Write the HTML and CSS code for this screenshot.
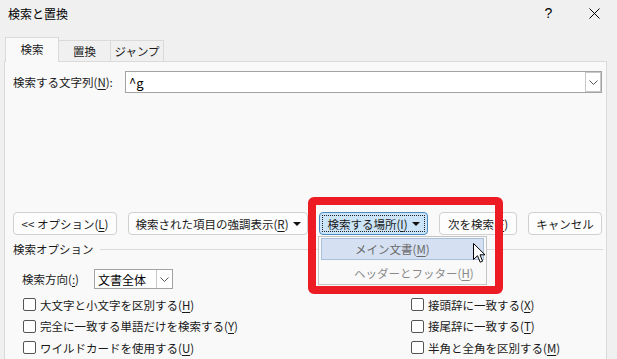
FILE: index.html
```html
<!DOCTYPE html>
<html>
	<head>
		<meta charset="UTF-8">
		<title>検索と置換</title>
		<link rel="stylesheet" href="styles.css">
	</head>
	<body>
		<div class="dialog">
			<div class="titlebar">
				<span class="title">検索と置換</span>
				<span class="help">?</span>
				<span class="close">
					<svg width="11" height="11" viewBox="0 0 11 11"><path d="M0.5 0.5 L10.5 10.5 M10.5 0.5 L0.5 10.5" stroke="#000" stroke-width="1"/></svg>
				</span>
			</div>
			<div class="tabs">
				<div class="tab active">検索</div>
				<div class="tab">置換</div>
				<div class="tab">ジャンプ</div>
			</div>
			<div class="panel">
				<div class="find-row">
					<span class="find-label">検索する文字列(<u>N</u>):</span>
					<div class="combo">
						<span class="combo-text">^g</span>
						<span class="combo-btn">
							<svg width="9" height="5" viewBox="0 0 9 5"><path d="M0.5 0.5 L4.5 4.5 L8.5 0.5" fill="none" stroke="#555" stroke-width="1"/></svg>
						</span>
					</div>
				</div>

				<div class="buttons">
					<div class="btn w-opt">&lt;&lt; オプション(<u>L</u>)</div>
					<div class="btn w-hl">検索された項目の強調表示(<u>R</u>) <span class="caret"></span></div>
					<div class="btn w-where focused"><span class="focus-ring">検索する場所(<u>I</u>) <span class="caret"></span></span></div>
					<div class="btn w-next">次を検索(<u>F</u>)</div>
					<div class="btn w-cancel">キャンセル</div>
				</div>

				<div class="group-head">
					<span>検索オプション</span>
					<span class="rule"></span>
				</div>

				<div class="direction">
					<span class="dir-label">検索方向(<u>:</u>)</span>
					<div class="select">
						<span class="select-text">文書全体</span>
						<span class="select-btn">
							<svg width="9" height="5" viewBox="0 0 9 5"><path d="M0.5 0.5 L4.5 4.5 L8.5 0.5" fill="none" stroke="#555" stroke-width="1"/></svg>
						</span>
					</div>
				</div>

				<div class="checks">
					<label class="check"><span class="box"></span>大文字と小文字を区別する(<u>H</u>)</label>
					<label class="check"><span class="box"></span>接頭辞に一致する(<u>X</u>)</label>
					<label class="check"><span class="box"></span>完全に一致する単語だけを検索する(<u>Y</u>)</label>
					<label class="check"><span class="box"></span>接尾辞に一致する(<u>T</u>)</label>
					<label class="check"><span class="box"></span>ワイルドカードを使用する(<u>U</u>)</label>
					<label class="check"><span class="box"></span>半角と全角を区別する(<u>M</u>)</label>
				</div>
			</div>
		</div>

		<!-- ドロップダウンと注目枠 -->
		<div class="menu">
			<div class="menu-item hover">メイン文書(<u>M</u>)</div>
			<div class="menu-item">ヘッダーとフッター(<u>H</u>)</div>
		</div>
		<div class="mark"></div>
		<svg class="cursor" width="13" height="21" viewBox="0 0 13 21">
			<path d="M0.5 0.5 L0.5 16.5 L4.5 12.7 L7.2 19.2 L9.6 18.2 L7 11.8 L12 11.8 Z" fill="#fff" stroke="#000" stroke-width="1" stroke-linejoin="round"/>
		</svg>
	</body>
</html>
```

FILE: styles.css
```css
/* Windows の検索と置換ダイアログ 617*359 */

html, body{margin:0; padding:0;}
body{
	width:617px;
	height:359px;
	overflow:hidden;
	background:#f0f0f0;
	font-family:"Noto Sans CJK JP", "Noto Sans", sans-serif;
	font-size:11.5px;
	color:#1a1a1a;
	position:relative;
}
u{text-decoration:underline; text-underline-offset:2px;}

.dialog{
	display:flex;
	flex-direction:column;
	height:359px;
}

/* タイトルバー */
.titlebar{
	height:26px;
	display:flex;
	align-items:center;
	padding-left:8px;
}
.title{flex:1; font-size:12px; color:#000;}
.help{
	width:45px;
	text-align:center;
	font-family:"Liberation Sans", sans-serif;
	font-size:14px;
	color:#000;
}
.close{
	width:46px;
	height:26px;
	display:flex;
	align-items:center;
	justify-content:center;
}

/* タブ */
.tabs{
	margin-top:11px;
	padding-left:5px;
	height:24px;
	display:flex;
	align-items:flex-end;
}
.tab{
	height:21px;
	width:52px;
	box-sizing:border-box;
	border:1px solid #dadada;
	border-left:none;
	border-bottom:none;
	background:#f0f0f0;
	display:flex;
	align-items:center;
	justify-content:center;
	color:#1a1a1a;
}
.tab:last-child{width:53px;}
.tab.active{
	width:54px;
	height:25px;
	margin-bottom:-1px;
	border-left:1px solid #dadada;
	background:#f9f9f9;
	position:relative;
	z-index:1;
	padding-bottom:2px;
}

/* パネル */
.panel{
	flex:1;
	margin:0 10px 0 4px;
	border:1px solid #dadada;
	border-bottom:none;
	background:#f9f9f9;
	padding:9px 4px 0 8px;
}
.find-row{
	display:flex;
	align-items:center;
	height:22px;
}
.find-label{width:112px; flex:none;}
.combo{
	flex:1;
	height:22px;
	box-sizing:border-box;
	border:1px solid #a3a3a3;
	background:#fff;
	display:flex;
	align-items:center;
	padding-left:3px;
}
.combo-text{flex:1; font-size:13px; color:#000;}
.combo-btn, .select-btn{
	width:16px;
	height:20px;
	box-sizing:border-box;
	border:1px solid #c8c8c8;
	display:flex;
	align-items:center;
	justify-content:center;
	background:#fff;
}

/* ボタン列 */
.buttons{
	margin-top:119px;
	display:flex;
	gap:11px;
}
.btn{
	height:23px;
	box-sizing:border-box;
	border:1px solid #d0d0d0;
	border-radius:4px;
	background:#fdfdfd;
	display:flex;
	align-items:center;
	justify-content:center;
	white-space:nowrap;
}
.w-opt{width:104px;}
.w-hl{width:180px;}
.w-where{width:109px;}
.w-next{width:78px;}
.w-cancel{width:74px;}
.btn.focused{
	background:#cce4f7;
	border-color:#4a8ac4;
}
.focus-ring{
	display:flex;
	align-items:center;
	justify-content:center;
	width:103px;
	height:17px;
	box-sizing:border-box;
	border:1px dotted #222;
}
.caret{
	display:inline-block;
	width:0;
	height:0;
	border-left:4px solid transparent;
	border-right:4px solid transparent;
	border-top:4px solid #111;
	margin-left:4px;
}

/* 検索オプション */
.group-head{
	margin-top:6px;
	height:16px;
	display:flex;
	align-items:center;
}
.rule{
	flex:1;
	border-top:1px solid #dadada;
	margin:1px -1px 0 6px;
}
.direction{
	margin-top:12px;
	margin-left:9px;
	display:flex;
	align-items:center;
	height:20px;
}
.dir-label{width:72px; flex:none;}
.select{
	width:79px;
	height:20px;
	box-sizing:border-box;
	border:1px solid #a3a3a3;
	background:#fff;
	display:flex;
	align-items:center;
	padding-left:3px;
	justify-content:space-between;
}
.select-text{font-size:12px; color:#000;}
.select-btn{height:18px; border:none; border-left:1px solid #c8c8c8;}

.checks{
	margin-top:5px;
	padding-left:10px;
	display:grid;
	grid-template-columns:388px 1fr;
	grid-auto-rows:21.5px;
}
.check{
	display:flex;
	align-items:center;
	white-space:nowrap;
}
.box{
	width:13px;
	height:13px;
	box-sizing:border-box;
	border:1px solid #555;
	border-radius:2px;
	background:#fff;
	margin-right:4px;
}

/* 重ね表示 */
.menu{
	position:absolute;
	left:318px;
	top:236px;
	width:169px;
	height:49px;
	box-sizing:border-box;
	border:1px solid #c4c4c4;
	background:#f9f9f9;
	padding:1px 2px;
}
.menu-item{
	height:22px;
	box-sizing:border-box;
	padding-left:33px;
	display:flex;
	align-items:center;
	color:#8a8a8a;
	margin-bottom:2px;
}
.menu-item.hover{
	background:#d5e1f2;
	border:1px solid #aabfdd;
	color:#6a6a6a;
}
.mark{
	position:absolute;
	left:308px;
	top:197px;
	width:195px;
	height:97px;
	box-sizing:border-box;
	border:8px solid #ed1c24;
	border-radius:6px;
}
.cursor{
	position:absolute;
	left:473px;
	top:243px;
}
```
